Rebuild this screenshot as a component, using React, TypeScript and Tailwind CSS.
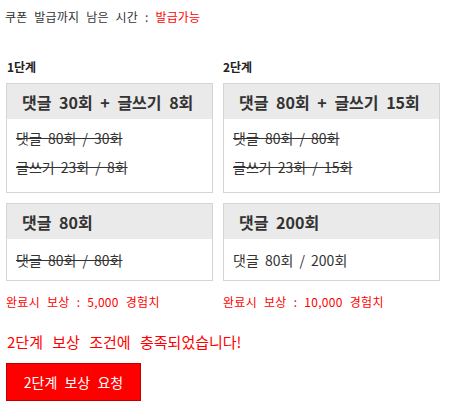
import React from "react";

const font = { fontFamily: '"Noto Sans CJK KR", "Noto Sans", sans-serif' };

function Box({
  title,
  lines,
  done,
  className,
}: {
  title: string;
  lines: string[];
  done: boolean;
  className: string;
}) {
  return (
    <div className={`border border-[#d5d5d5] bg-white ${className}`}>
      <div className="h-[35px] bg-[#eaeaea] flex items-center pl-[15px] text-[16px] font-bold text-[#333] [word-spacing:4px] leading-none">
        {title}
      </div>
      <div
        className={`flex flex-col px-[9px] text-[14px] text-[#333] [word-spacing:3px] leading-none ${
          lines.length > 1 ? "pt-[12px] pb-[16px] gap-[15px]" : "h-[41px] justify-center"
        }`}
      >
        {lines.map((l) => (
          <div key={l} className={done ? "line-through decoration-[#333]" : ""}>
            {l}
          </div>
        ))}
      </div>
    </div>
  );
}

export default function App() {
  return (
    <div style={font} className="w-[469px] h-[417px] bg-white text-[#333] relative">
      <div className="pt-[10px] pl-[5px] text-[12px] leading-[14px] [word-spacing:4px] tracking-[0.2px]">
        쿠폰 발급까지 남은 시간 : <span className="text-[#ff0000]">발급가능</span>
      </div>

      <div className="flex pl-[6px] mt-[37px]">
        <div className="w-[217px] flex flex-col">
          <div className="text-[12px] font-bold leading-none pl-[1px] h-[22px] text-[#222]">1단계</div>
          <Box
            className="w-[207px] h-[110px]"
            title="댓글 30회 + 글쓰기 8회"
            lines={["댓글 80회 / 30회", "글쓰기 23회 / 8회"]}
            done
          />
          <div className="h-[10px]" />
          <Box className="w-[207px] h-[78px]" title="댓글 80회" lines={["댓글 80회 / 80회"]} done />
          <div className="mt-[15px] text-[12px] leading-none text-[#ff0000] [word-spacing:4px] tracking-[0.3px]">
            완료시 보상 : 5,000 경험치
          </div>
        </div>
        <div className="w-[217px] flex flex-col">
          <div className="text-[12px] font-bold leading-none h-[22px] text-[#222]">2단계</div>
          <Box
            className="w-[217px] h-[110px]"
            title="댓글 80회 + 글쓰기 15회"
            lines={["댓글 80회 / 80회", "글쓰기 23회 / 15회"]}
            done
          />
          <div className="h-[10px]" />
          <Box className="w-[217px] h-[78px]" title="댓글 200회" lines={["댓글 80회 / 200회"]} done={false} />
          <div className="mt-[15px] text-[12px] leading-none text-[#ff0000] [word-spacing:4px] tracking-[0.3px]">
            완료시 보상 : 10,000 경험치
          </div>
        </div>
      </div>

      <div className="pl-[7px] mt-[26px] text-[15px] leading-none text-[#ff0000] [word-spacing:6px]">
        2단계 보상 조건에 충족되었습니다!
      </div>
      <div className="pl-[6px] mt-[14px]">
        <button className="w-[135px] h-[38px] bg-[#ff0000] border border-[#c00000] text-white text-[14px] leading-none [word-spacing:4px]">
          2단계 보상 요청
        </button>
      </div>
    </div>
  );
}
